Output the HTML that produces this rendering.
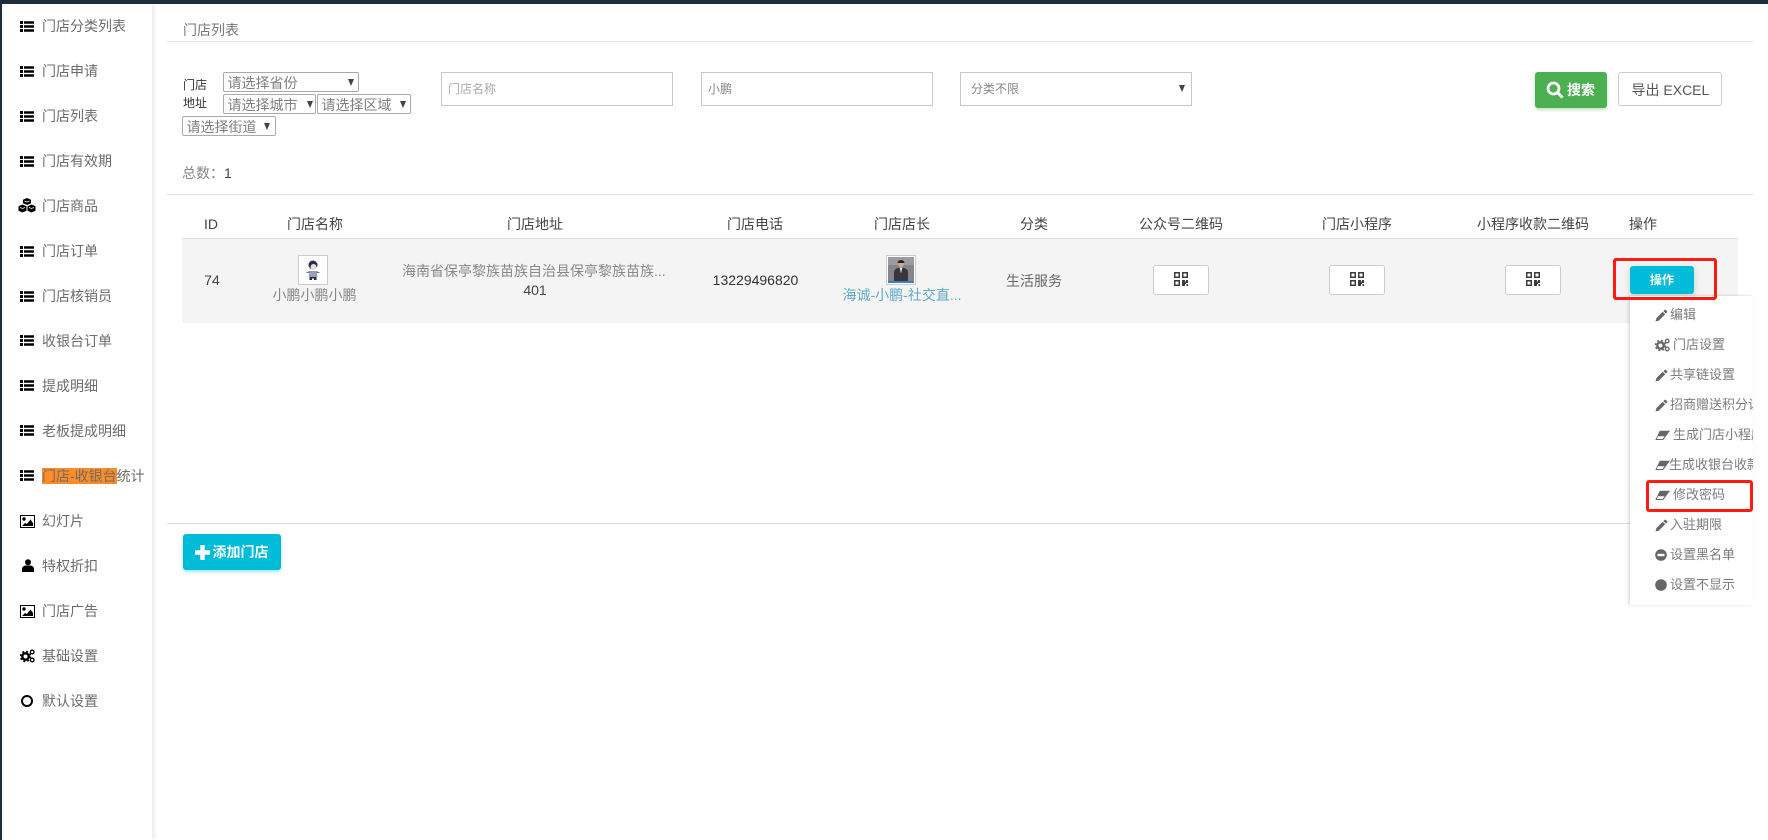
<!DOCTYPE html>
<html lang="zh">
<head>
<meta charset="utf-8">
<title>门店列表</title>
<style>
html,body{margin:0;padding:0;background:#fff}
#p{position:relative;width:1768px;height:840px;overflow:hidden;background:#fff;font-family:"Liberation Sans","Noto Sans CJK SC",sans-serif;font-size:14px;color:#666}
#p div,#p svg{position:absolute}
.t{white-space:nowrap;height:20px;line-height:20px}
.c{transform:translateX(-50%)}
.m{color:#6c6c6c;left:42px}
.i{fill:#000}
.s{border:1px solid #aaa;border-radius:2px;box-sizing:border-box;height:20px;line-height:20px;color:#808080;padding-left:3.5px;white-space:nowrap;background:#fff}
.a{width:0;height:0;border-left:3px solid transparent;border-right:3px solid transparent;border-top:7px solid #444}
.inp{border:1px solid #c8c8c8;box-sizing:border-box;height:34px;top:72px;width:232px;background:#fff}
.th{top:214px;color:#444}
.q{top:265px;width:56px;height:30px;box-sizing:border-box;border:1px solid #ccc;border-radius:3px;background:#fff}
.d{color:#7c7c7c;font-size:13px}
.ic{fill:#666}
.red{border:3px solid #ff1a10;border-radius:3px;box-sizing:border-box}
</style>
</head>
<body>
<div id="p">
<svg width="0" height="0" style="position:absolute">
<defs>
<symbol id="list" viewBox="0 0 14 12"><path d="M0 0h3v3H0zM4 0.300H14v2.400H4zM0 4h3v3H0zM4 4.300H14v2.400H4zM0 8h3v3H0zM4 8.300H14v2.400H4z"/></symbol>
<symbol id="img" viewBox="0 0 15 13"><path fill-rule="evenodd" d="M0 0h15v13H0zM1 1v11h13V1z"/><circle cx="4" cy="4" r="1.700"/><path d="M2 11l3-3 2 1 3.500-4.500L13 8v3z"/></symbol>
<symbol id="gear" viewBox="0 0 15 14"><circle cx="5.500" cy="7.500" r="3.200" fill="none" stroke="currentColor" stroke-width="2.400"/><circle cx="5.500" cy="7.500" r="5" fill="none" stroke="currentColor" stroke-width="1.500" stroke-dasharray="2 2"/><circle cx="12.200" cy="3" r="1.800" fill="none" stroke="currentColor" stroke-width="1.300"/><circle cx="12.200" cy="11" r="1.800" fill="none" stroke="currentColor" stroke-width="1.300"/></symbol>
<symbol id="pen" viewBox="0 0 13 13"><path d="M0.500 12.500l0.900-3.400 6.300-6.300 2.500 2.500-6.300 6.300zM8.400 2.100l1.100-1.100a1 1 0 0 1 1.400 0l1.100 1.100a1 1 0 0 1 0 1.400l-1.100 1.100z"/></symbol>
<symbol id="era" viewBox="0 0 15 11"><path fill-rule="evenodd" d="M4.800 0.800H15L8.200 10H0.300zM2.900 6.300L1.900 9H7.600L9.600 6.300z"/></symbol>
<symbol id="qr" viewBox="0 0 14 14"><path fill-rule="evenodd" d="M0 0h6v6H0zM1.500 1.500v3h3v-3zM8 0h6v6H8zM9.500 1.500v3h3v-3zM0 8h6v6H0zM1.500 9.500v3h3v-3zM8 8h3v1.500h1V8h2v3h-2v1h-1v2H8zM12.500 12h1.500v2h-1.500z"/></symbol>
</defs>
</svg>

<!-- frame -->
<div style="left:0;top:0;width:1768px;height:4px;background:#1f2d3d"></div>
<div style="left:0;top:0;width:2px;height:840px;background:#1f2d3d"></div>
<div style="left:2px;top:4px;width:150px;height:836px;background:#fff;box-shadow:2px 0 5px rgba(0,0,0,.09)"></div>

<!-- sidebar -->
<svg class="i" style="left:20px;top:20.500px" width="14" height="12"><use href="#list"/></svg><div class="t m" style="top:16px">门店分类列表</div>
<svg class="i" style="left:20px;top:65.500px" width="14" height="12"><use href="#list"/></svg><div class="t m" style="top:61px">门店申请</div>
<svg class="i" style="left:20px;top:110.500px" width="14" height="12"><use href="#list"/></svg><div class="t m" style="top:106px">门店列表</div>
<svg class="i" style="left:20px;top:155.500px" width="14" height="12"><use href="#list"/></svg><div class="t m" style="top:151px">门店有效期</div>
<svg class="i" style="left:18px;top:198px" width="18" height="15" viewBox="0 0 18 15"><path d="M9 0l4 1.700v3.600l-4 1.700-4-1.700V1.700z"/><path d="M4.500 6.500l4 1.700v4.600l-4 1.700-4-1.700V8.200z"/><path d="M13.500 6.500l4 1.700v4.600l-4 1.700-4-1.700V8.200z"/><path d="M6.500 3l2.500 1 2.500-1M2 9.500l2.500 1 2.500-1M11 9.500l2.500 1 2.500-1" fill="none" stroke="#fff" stroke-width=".7"/></svg><div class="t m" style="top:196px">门店商品</div>
<svg class="i" style="left:20px;top:245.500px" width="14" height="12"><use href="#list"/></svg><div class="t m" style="top:240.500px">门店订单</div>
<svg class="i" style="left:20px;top:290.500px" width="14" height="12"><use href="#list"/></svg><div class="t m" style="top:285.500px">门店核销员</div>
<svg class="i" style="left:20px;top:335px" width="14" height="12"><use href="#list"/></svg><div class="t m" style="top:330.500px">收银台订单</div>
<svg class="i" style="left:20px;top:380px" width="14" height="12"><use href="#list"/></svg><div class="t m" style="top:375.500px">提成明细</div>
<svg class="i" style="left:20px;top:425px" width="14" height="12"><use href="#list"/></svg><div class="t m" style="top:420.500px">老板提成明细</div>
<svg class="i" style="left:20px;top:470px" width="14" height="12"><use href="#list"/></svg>
<div style="left:42px;top:468px;width:75px;height:16px;background:#ff8c26"></div>
<div class="t m" style="top:465.500px">门店-收银台统计</div>
<svg class="i" style="left:20px;top:514.500px" width="15" height="13"><use href="#img"/></svg><div class="t m" style="top:510.500px">幻灯片</div>
<svg class="i" style="left:21.500px;top:559px" width="12" height="13" viewBox="0 0 12 13"><circle cx="6" cy="3.200" r="3"/><path d="M0 13v-3c0-2 2-3.500 3.500-3.500h5C10 6.500 12 8 12 10v3z"/></svg><div class="t m" style="top:556px">特权折扣</div>
<svg class="i" style="left:20px;top:604.500px" width="15" height="13"><use href="#img"/></svg><div class="t m" style="top:600.500px">门店广告</div>
<svg style="left:20px;top:649px;color:#000" width="15" height="14"><use href="#gear"/></svg><div class="t m" style="top:645.500px">基础设置</div>
<svg style="left:20px;top:694px" width="14" height="14"><circle cx="7" cy="7" r="5" fill="none" stroke="#000" stroke-width="2"/></svg><div class="t m" style="top:690.500px">默认设置</div>

<!-- title -->
<div class="t" style="left:183px;top:20px;color:#777">门店列表</div>
<div style="left:167px;top:41px;width:1586px;height:1px;background:#e6e6e6"></div>

<!-- filter -->
<div class="t" style="left:183px;top:75px;font-size:12px;color:#333">门店</div>
<div class="t" style="left:183px;top:93px;font-size:12px;color:#333">地址</div>
<div class="s" style="left:223px;top:72px;width:136px">请选择省份</div><div class="a" style="left:348px;top:79px"></div>
<div class="s" style="left:223px;top:94px;width:93px">请选择城市</div><div class="a" style="left:307px;top:101px"></div>
<div class="s" style="left:317px;top:94px;width:94px">请选择区域</div><div class="a" style="left:400px;top:101px"></div>
<div class="s" style="left:182px;top:116px;width:94px">请选择街道</div><div class="a" style="left:264px;top:123px"></div>

<div class="inp" style="left:441px"></div><div class="t" style="left:448px;top:79px;font-size:12px;color:#aaa">门店名称</div>
<div class="inp" style="left:701px"></div><div class="t" style="left:708px;top:79px;font-size:12px;color:#888">小鹏</div>
<div class="inp" style="left:960px"></div><div class="t" style="left:971px;top:79px;font-size:12px;color:#888">分类不限</div><div class="a" style="left:1179px;top:85px"></div>

<div style="left:1535px;top:72px;width:72px;height:36px;background:#4caf50;border-radius:3px;box-shadow:0 2px 3px rgba(76,175,80,.35)"></div>
<svg style="left:1546px;top:81px" width="18" height="18" viewBox="0 0 18 18"><circle cx="7.500" cy="7.500" r="5.500" fill="none" stroke="#fff" stroke-width="2.800"/><path d="M11.500 11.500l5 5" stroke="#fff" stroke-width="3"/></svg>
<div class="t" style="left:1567px;top:80px;color:#fff;font-weight:bold">搜索</div>
<div style="left:1618px;top:72px;width:104px;height:34px;box-sizing:border-box;border:1px solid #ccc;border-radius:3px"></div>
<div class="t" style="left:1631.500px;top:80px;color:#555">导出 EXCEL</div>

<div class="t" style="left:182px;top:163px;color:#888">总数：</div><div class="t" style="left:224px;top:163px;color:#5a3a2a">1</div>
<div style="left:167px;top:194px;width:1586px;height:1px;background:#ddd"></div>

<!-- table -->
<div class="t th c" style="left:211px">ID</div>
<div class="t th c" style="left:315px">门店名称</div>
<div class="t th c" style="left:535px">门店地址</div>
<div class="t th c" style="left:755px">门店电话</div>
<div class="t th c" style="left:902px">门店店长</div>
<div class="t th c" style="left:1034px">分类</div>
<div class="t th c" style="left:1181px">公众号二维码</div>
<div class="t th c" style="left:1357px">门店小程序</div>
<div class="t th c" style="left:1533px">小程序收款二维码</div>
<div class="t th c" style="left:1643px">操作</div>
<div style="left:182px;top:238px;width:1556px;height:1px;background:#ddd"></div>
<div style="left:182px;top:239px;width:1556px;height:84px;background:#f4f4f4"></div>

<div class="t c" style="left:212px;top:270px;color:#444">74</div>
<div style="left:298px;top:255px;width:30px;height:30px;box-sizing:border-box;border:1px solid #ccc;background:#fff"></div>
<svg style="left:299px;top:256px" width="28" height="28" viewBox="0 0 28 28"><circle cx="14" cy="9" r="4.500" fill="#2a2a5c"/><circle cx="14.500" cy="11" r="3" fill="#e8dcd0"/><path d="M10.500 15h7l1 6h-9z" fill="#9aa0b8"/><path d="M6.500 17l4-2v2zM21.500 17l-4-2v2z" fill="#6a6f90"/><path d="M10.500 21h7v3h-2.500v-1.500h-2V24h-2.500z" fill="#2a2a5c"/></svg>
<div class="t c" style="left:314.500px;top:285px;color:#888">小鹏小鹏小鹏</div>
<div class="t" style="left:402px;top:260.500px;color:#888">海南省保亭黎族苗族自治县保亭黎族苗族...</div>
<div class="t c" style="left:535px;top:280px;color:#444">401</div>
<div class="t c" style="left:755.500px;top:270px;color:#333">13229496820</div>
<div style="left:886px;top:255px;width:30px;height:30px;box-sizing:border-box;border:1px solid #ccc;background:#fff"></div>
<svg style="left:888px;top:257px" width="26" height="26" viewBox="0 0 26 26"><rect width="26" height="26" fill="#86868a"/><rect y="0" width="26" height="8" fill="#9c9ca0"/><circle cx="13" cy="7" r="3" fill="#c9a994"/><path d="M13 3a3.500 3 0 0 1 3.500 3H9.500A3.500 3 0 0 1 13 3z" fill="#222"/><path d="M6 24V15c0-2.500 3-4.500 7-4.500s7 2 7 4.500v9z" fill="#36363c"/><path d="M11.500 10.500h3l-1.500 6z" fill="#ddd"/><rect y="24" width="26" height="2" fill="#3a7fc0"/></svg>
<div class="t c" style="left:902px;top:285px;color:#62a9c9">海诚-小鹏-社交直...</div>
<div class="t c" style="left:1034px;top:271px;color:#666">生活服务</div>

<div class="q" style="left:1153px"></div><svg style="left:1174px;top:272px;fill:#3c3c3c" width="14" height="14"><use href="#qr"/></svg>
<div class="q" style="left:1329px"></div><svg style="left:1350px;top:272px;fill:#3c3c3c" width="14" height="14"><use href="#qr"/></svg>
<div class="q" style="left:1505px"></div><svg style="left:1526px;top:272px;fill:#3c3c3c" width="14" height="14"><use href="#qr"/></svg>

<div style="left:1630px;top:266px;width:64px;height:28px;background:#00bcd9;border-radius:3px;box-shadow:0 2px 8px rgba(0,0,0,.15)"></div>
<div class="t c" style="left:1662px;top:270px;color:#fff;font-size:12px;font-weight:bold">操作</div>

<!-- divider under table -->
<div style="left:167px;top:523px;width:1463px;height:1px;background:#ddd"></div>

<!-- dropdown -->
<div style="left:1630px;top:296px;width:123px;height:309px;background:#fff;box-shadow:-2px 0 3px rgba(0,0,0,.12),0 -1px 2px rgba(0,0,0,.05)"></div>
<div style="left:1630px;top:296px;width:123px;height:309px;overflow:hidden">
<svg class="ic" style="left:25px;top:13px" width="13" height="13"><use href="#pen"/></svg><div class="t d" style="left:40px;top:9px">编辑</div>
<svg style="left:25px;top:42px;color:#666" width="15" height="14"><use href="#gear"/></svg><div class="t d" style="left:43px;top:39px">门店设置</div>
<svg class="ic" style="left:25px;top:73px" width="13" height="13"><use href="#pen"/></svg><div class="t d" style="left:40px;top:69px">共享链设置</div>
<svg class="ic" style="left:25px;top:103px" width="13" height="13"><use href="#pen"/></svg><div class="t d" style="left:40px;top:99px">招商赠送积分设置</div>
<svg class="ic" style="left:25px;top:134px" width="15" height="11"><use href="#era"/></svg><div class="t d" style="left:43px;top:129px">生成门店小程序码</div>
<svg class="ic" style="left:25px;top:164px" width="15" height="11"><use href="#era"/></svg><div class="t d" style="left:39px;top:159px">生成收银台收款码</div>
<svg class="ic" style="left:25px;top:194px" width="15" height="11"><use href="#era"/></svg><div class="t d" style="left:43px;top:189px">修改密码</div>
<svg class="ic" style="left:25px;top:223px" width="13" height="13"><use href="#pen"/></svg><div class="t d" style="left:40px;top:219px">入驻期限</div>
<svg style="left:25px;top:253px" width="12" height="12"><circle cx="6" cy="6" r="5.800" fill="#666"/><rect x="2.500" y="4.800" width="7" height="2.400" fill="#fff"/></svg><div class="t d" style="left:40px;top:249px">设置黑名单</div>
<svg style="left:25px;top:283px" width="12" height="12"><circle cx="6" cy="6" r="5.800" fill="#666"/></svg><div class="t d" style="left:40px;top:279px">设置不显示</div>
</div>

<!-- red annotations -->
<div class="red" style="left:1613px;top:258px;width:104px;height:42px;z-index:4"></div>
<div class="red" style="left:1646px;top:480px;width:107px;height:32px;z-index:4"></div>

<!-- add button -->
<div style="left:183px;top:534px;width:98px;height:36px;background:#00bcd9;border-radius:3px;box-shadow:0 2px 3px rgba(0,188,217,.35)"></div>
<svg style="left:195px;top:545px" width="15" height="15"><path d="M5.300 0h4.400v5.300H15v4.400H9.700V15H5.300V9.700H0V5.300h5.300z" fill="#fff"/></svg>
<div class="t" style="left:212.500px;top:542px;color:#fff;font-weight:bold">添加门店</div>
</div>
</body>
</html>
